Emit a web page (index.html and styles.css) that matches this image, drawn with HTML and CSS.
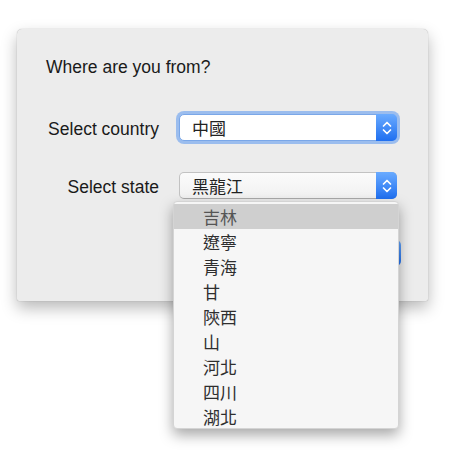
FILE: index.html
```html
<!DOCTYPE html>
<html lang="zh-Hant">
  <head>
    <meta charset="UTF-8" />
    <meta name="viewport" content="width=device-width, initial-scale=1.0" />
    <title>Where are you from?</title>
    <link rel="stylesheet" href="styles.css">
  </head>
  <body>
    <div class="window">
      <h2>Where are you from?</h2>

      <div class="form">
        <label>Select country</label>
        <div class="select focused">
          <span class="value">中國</span>
          <span class="stepper">
            <svg width="10" height="18" viewBox="0 0 10 18"><path d="M1.5 7 L5 3.5 L8.5 7 M1.5 11 L5 14.5 L8.5 11" fill="none" stroke="#fff" stroke-width="1.7" stroke-linecap="round" stroke-linejoin="round"/></svg>
          </span>
        </div>

        <label>Select state</label>
        <div class="select-wrap">
          <div class="select plain">
            <span class="value">黑龍江</span>
            <span class="stepper">
              <svg width="10" height="18" viewBox="0 0 10 18"><path d="M1.5 7 L5 3.5 L8.5 7 M1.5 11 L5 14.5 L8.5 11" fill="none" stroke="#fff" stroke-width="1.7" stroke-linecap="round" stroke-linejoin="round"/></svg>
            </span>
          </div>

          <!-- open menu of the state popup -->
          <ul class="menu">
            <li class="selected">吉林</li>
            <li>遼寧</li>
            <li>青海</li>
            <li>甘</li>
            <li>陝西</li>
            <li>山</li>
            <li>河北</li>
            <li>四川</li>
            <li>湖北</li>
          </ul>
        </div>
      </div>

      <div class="actions">
        <button class="ok">OK</button>
      </div>
    </div>
  </body>
</html>
```

FILE: styles.css
```css
html {
  background: #ffffff;
}

body {
  margin: 0;
  padding-top: 29px;
  min-height: 460px;
  box-sizing: border-box;
  font-family: "Liberation Sans", "Noto Sans CJK TC", sans-serif;
  color: #1a1a1a;
}

.window {
  width: 411px;
  box-sizing: border-box;
  margin-left: 17px;
  padding: 28px 31px 35px 29px;
  background-color: #ececec;
  border-radius: 5px 5px 2px 2px;
  box-shadow: 0 7px 16px rgba(0, 0, 0, 0.28), 0 0 1px rgba(0, 0, 0, 0.35);
}

h2 {
  margin: 0;
  font-size: 17.5px;
  font-weight: normal;
  line-height: 20px;
}

.form {
  display: grid;
  grid-template-columns: 113px 218px;
  column-gap: 20px;
  row-gap: 31px;
  align-items: center;
  margin-top: 37px;
}

label {
  font-size: 17.5px;
  text-align: right;
  line-height: 20px;
  padding-top: 3px;
  margin-left: -3px;
}

.select-wrap {
  position: relative;
}

.select {
  display: flex;
  height: 27px;
  box-sizing: border-box;
  border: 1px solid #bdbdbd;
  border-radius: 5px;
  background: #ffffff;
  font-family: "Noto Sans CJK TC", sans-serif;
  font-size: 17px;
}

.select.focused {
  border-color: #7aa7e8;
  box-shadow: 0 0 0 3px rgba(112, 165, 240, 0.65);
}

.select.plain {
  background: linear-gradient(#fbfbfb, #f1f1f1);
  border-color: #c2c2c2;
  border-bottom-color: #aaaaaa;
}

.value {
  flex: 1;
  padding-left: 12px;
  line-height: 25px;
  color: #222;
}

.stepper {
  width: 21px;
  display: flex;
  align-items: center;
  justify-content: center;
  margin: -1px -1px -1px 0;
  border-radius: 0 5px 5px 0;
  background: linear-gradient(#6aabff, #1f6ff0);
}

.menu {
  position: absolute;
  top: 29px;
  left: -6px;
  width: 226px;
  height: 228px;
  box-sizing: border-box;
  margin: 0;
  padding: 2px 0 0;
  list-style: none;
  overflow: hidden;
  background: #f6f6f6;
  border: 1px solid #d4d4d4;
  border-radius: 4px;
  box-shadow: 0 6px 14px rgba(0, 0, 0, 0.35);
  z-index: 2;
}

.menu li {
  height: 25px;
  line-height: 25px;
  padding-left: 29px;
  font-family: "Noto Sans CJK TC", sans-serif;
  font-size: 17px;
  color: #2e2e2e;
}

.menu li.selected {
  background-color: #cfcfcf;
  color: #555;
}

.actions {
  display: flex;
  justify-content: flex-end;
  margin-top: 41px;
  margin-right: -4px;
}

button.ok {
  width: 80px;
  height: 26px;
  border: none;
  border-radius: 5px;
  background: linear-gradient(#6aabff, #1f6ff0);
  color: white;
  font-size: 14px;
}
```
